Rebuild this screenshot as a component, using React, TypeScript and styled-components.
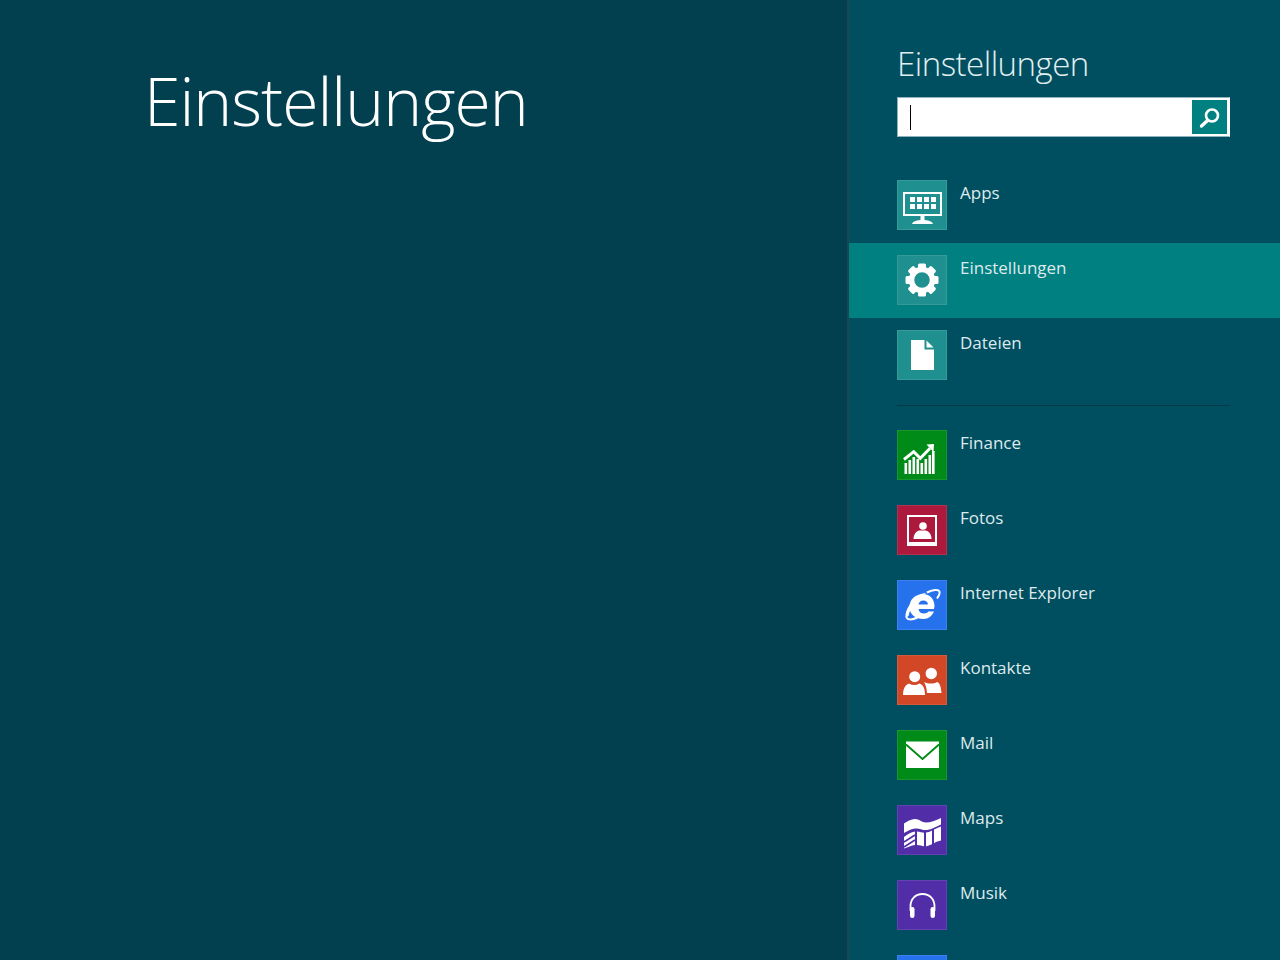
import React from 'react';
import styled, { createGlobalStyle } from 'styled-components';

const GlobalStyle = createGlobalStyle`
  html, body {
    margin: 0;
    padding: 0;
    height: 960px;
    overflow: hidden;
    background: #024050;
  }
`;

const AppsIcon = () => (
  <svg width="50" height="50" viewBox="0 0 50 50">
    <rect x="7" y="13" width="37" height="22" fill="none" stroke="#fff" strokeWidth="2" />
    {[0, 1, 2, 3].map((c) =>
      [0, 1].map((r) => <rect key={`${c}-${r}`} x={13 + c * 7} y={17 + r * 7} width="5" height="5" fill="#fff" />)
    )}
    <path d="M23.5 35h4v5h-4z" fill="#fff" />
    <path d="M15 44c1-3 5-4 10.500-4s9.500 1 10.500 4z" fill="#fff" />
  </svg>
);

const GearIcon = () => (
  <svg width="50" height="50" viewBox="0 0 50 50">
    <circle cx="25" cy="25" r="10.500" fill="none" stroke="#fff" strokeWidth="5.500" />
    {[0, 45, 90, 135, 180, 225, 270, 315].map((a) => (
      <rect key={a} x="21" y="8.500" width="8" height="7" rx="1.500" fill="#fff" transform={`rotate(${a} 25 25)`} />
    ))}
  </svg>
);

const FileIcon = () => (
  <svg width="50" height="50" viewBox="0 0 50 50">
    <path d="M14 10h13.500v9.500H37V40H14z" fill="#fff" />
    <path d="M29.500 10.500l7 7h-7z" fill="#fff" />
  </svg>
);

const FinanceIcon = () => (
  <svg width="50" height="50" viewBox="0 0 50 50">
    {[
      [7.500, 33],
      [11.500, 30],
      [15.500, 27],
      [19.500, 29],
      [23.500, 33],
      [27.500, 29],
      [31.500, 25],
      [35, 21],
    ].map(([x, y]) => (
      <rect key={x} x={x} y={y} width="2.600" height={44 - y} fill="#fff" />
    ))}
    <path d="M7 29.500L16.700 21.700l6.600 6.600L33 18.300" fill="none" stroke="#fff" strokeWidth="3" />
    <path d="M29.500 14.500l7.500-.5-.5 8z" fill="#fff" />
  </svg>
);

const FotosIcon = () => (
  <svg width="50" height="50" viewBox="0 0 50 50">
    <path fillRule="evenodd" d="M10 10h30v31H10zM12 12v25h26V12z" fill="#fff" />
    <circle cx="26" cy="21" r="3.800" fill="#fff" />
    <path d="M16.500 34c0-5 3-8 6-8.500h6c3 .5 6 3.500 6 8.500z" fill="#fff" />
  </svg>
);

const IeIcon = () => (
  <svg width="50" height="50" viewBox="0 0 50 50">
    <path
      fillRule="evenodd"
      d="M37 29H21.500c.5 3 2.500 4.500 5.500 4.500 2 0 3.500-.8 4.500-2H37C35 36 31.500 39 26.500 39 18.500 39 12.500 34.500 12.500 27 12.500 19 19 14 26 14 33 14 37.500 19.500 37.500 26zM21.500 24.500H31c-.3-2.500-2-4-4.700-4-2.500 0-4.300 1.500-4.800 4z"
      fill="#fff"
    />
    <path d="M8.500 37C8 30 14 20 24 14l6-1.500C20 17 13.500 27 11.500 36z" fill="#fff" />
    <path d="M9.500 36c-.5 4 5 4.500 11 1.500" fill="none" stroke="#fff" strokeWidth="2" />
    <path d="M30 12.500c6-3 11.500-3.500 12.500-1 .6 1.700-.8 4.500-2.500 7" fill="none" stroke="#fff" strokeWidth="2" />
  </svg>
);

const KontakteIcon = () => (
  <svg width="50" height="50" viewBox="0 0 50 50">
    <circle cx="34.300" cy="18.500" r="5.700" fill="#fff" />
    <path d="M27 27c2 1 5 1.500 7 1.500s4.500-.5 6-1.500c3 1 4 5 4.500 11H30c-.3-4-1-8-3-11z" fill="#fff" />
    <circle cx="17.700" cy="21.700" r="5.500" fill="#fff" />
    <path d="M6 40c0-6 2-10 6-11.500 3.500 2 7 2 10.500 0 4 1.500 5.500 5.500 5.500 11.500z" fill="#fff" />
  </svg>
);

const MailIcon = () => (
  <svg width="50" height="50" viewBox="0 0 50 50">
    <rect x="9" y="11.500" width="33" height="26.500" fill="#fff" />
    <path d="M9 14.500L25.500 29 42 14.500" fill="none" stroke="#008a17" strokeWidth="1.800" />
  </svg>
);

const MapsIcon = () => (
  <svg width="50" height="50" viewBox="0 0 50 50">
    <path d="M7 18.500c3-2 7-4.500 11-4.500s7 3.500 11 3.500 10-2 15-4.500v6.500c-5 2-9 5-14 5.500s-7-2-12-1.500-8 3-11 4.500z" fill="#fff" />
    <path d="M7 32c3-2.500 7-5 11-5.500v13.500c-4 .5-7 2-11 3.500zM20 26.500c3 .3 5 1 7 1.200v13.500c-2-.2-4-1-7-1.200zM29 27.500c2 0 4-1 6-2v13.700c-2 .8-4 1.800-6 2zM37 24.500c2-1 4.500-2 7-3v14c-2.500.5-5 1.500-7 2.700z" fill="#fff" />
    <path d="M7 37l11-7M7 42l11-7" fill="none" stroke="#512da8" strokeWidth="1.600" />
  </svg>
);

const MusikIcon = () => (
  <svg width="50" height="50" viewBox="0 0 50 50">
    <path d="M13.500 31v-4.500C13.500 19 18.500 14 25.500 14S37.500 19 37.500 26.500V31" fill="none" stroke="#fff" strokeWidth="1.800" />
    <rect x="13" y="27" width="4.500" height="11" rx="2.200" fill="#fff" />
    <rect x="33.500" y="27" width="4.500" height="11" rx="2.200" fill="#fff" />
  </svg>
);

const SearchIcon = () => (
  <svg width="36" height="36" viewBox="0 0 36 36">
    <circle cx="20" cy="15.500" r="6" fill="none" stroke="#fff" strokeWidth="2.600" />
    <path d="M15.500 20.500L9.500 26" stroke="#fff" strokeWidth="3.400" strokeLinecap="round" />
  </svg>
);

const systemApps = [
  { name: 'Apps', icon: <AppsIcon />, color: '#1f8f8f' },
  { name: 'Einstellungen', icon: <GearIcon />, color: '#1f8f8f', selected: true },
  { name: 'Dateien', icon: <FileIcon />, color: '#1f8f8f' },
];

const userApps = [
  { name: 'Finance', icon: <FinanceIcon />, color: '#008a17' },
  { name: 'Fotos', icon: <FotosIcon />, color: '#ac193d' },
  { name: 'Internet Explorer', icon: <IeIcon />, color: '#2672ec' },
  { name: 'Kontakte', icon: <KontakteIcon />, color: '#d24726' },
  { name: 'Mail', icon: <MailIcon />, color: '#008a17' },
  { name: 'Maps', icon: <MapsIcon />, color: '#512da8' },
  { name: 'Musik', icon: <MusikIcon />, color: '#512da8' },
  { name: '', icon: null, color: '#2672ec' },
];

const App = () => {
  return (
    <Screen>
      <GlobalStyle />
      <MainPane>
        <PageTitle>Einstellungen</PageTitle>
      </MainPane>
      <SearchCharm>
        <CharmTitle>Einstellungen</CharmTitle>
        <SearchBox>
          <SearchField>
            <Caret />
          </SearchField>
          <SearchButton>
            <SearchIcon />
          </SearchButton>
        </SearchBox>
        <AppList>
          {systemApps.map((app) => (
            <AppRow key={app.name} $selected={app.selected}>
              <Tile $color={app.color}>{app.icon}</Tile>
              <AppName>{app.name}</AppName>
            </AppRow>
          ))}
        </AppList>
        <Separator />
        <AppList>
          {userApps.map((app) => (
            <AppRow key={app.color + app.name}>
              <Tile $color={app.color}>{app.icon}</Tile>
              <AppName>{app.name}</AppName>
            </AppRow>
          ))}
        </AppList>
      </SearchCharm>
    </Screen>
  );
};

const Screen = styled.div`
  display: flex;
  width: 1280px;
  height: 960px;
  overflow: hidden;
  font-family: 'Open Sans', 'Noto Sans', 'Liberation Sans', sans-serif;
`;

const MainPane = styled.main`
  width: 847px;
  flex: none;
  padding: 56px 0 0 144px;
  box-sizing: border-box;
  background: #024050;
`;

const PageTitle = styled.h1`
  margin: 0;
  font-size: 66px;
  line-height: 88px;
  font-weight: 300;
  letter-spacing: -1px;
  color: #fff;
`;

const SearchCharm = styled.aside`
  flex: 1;
  display: flex;
  flex-direction: column;
  border-left: 2px solid #1f4452;
  background: #004f60;
`;

const CharmTitle = styled.h2`
  margin: 42px 0 0 48px;
  height: 44px;
  font-size: 33px;
  line-height: 44px;
  font-weight: 300;
  letter-spacing: -0.5px;
  color: #e3eef0;
`;

const SearchBox = styled.div`
  flex: none;
  display: flex;
  width: 333px;
  height: 40px;
  margin: 11px 0 31px 48px;
  padding: 2px;
  box-sizing: border-box;
  background: #fff;
  border: 1px solid #8fb3bd;
  border-right-color: #fff;
`;

const SearchField = styled.div`
  flex: 1;
  display: flex;
  align-items: center;
  padding-left: 10px;
`;

const Caret = styled.span`
  width: 1px;
  height: 25px;
  background: #000;
`;

const SearchButton = styled.div`
  width: 35px;
  height: 34px;
  background: #008080;
`;

const AppList = styled.ul`
  flex: none;
  list-style: none;
  margin: 0;
  padding: 0;
`;

const AppRow = styled.li<{ $selected?: boolean }>`
  display: flex;
  height: 75px;
  padding: 12px 0 0 48px;
  box-sizing: border-box;
  background: ${(props) => (props.$selected ? '#008080' : 'transparent')};
`;

const Tile = styled.div<{ $color: string }>`
  width: 50px;
  height: 50px;
  flex: none;
  box-shadow: inset 0 0 0 1px rgba(255, 255, 255, 0.1);
  background: ${(props) => props.$color};
`;

const AppName = styled.span`
  margin: 0 0 0 13px;
  font-size: 17px;
  line-height: 25px;
  color: #dfeaed;
`;

const Separator = styled.div`
  flex: none;
  width: 333px;
  height: 1px;
  margin: 12px 0 12px 48px;
  background: #023c4b;
`;

export default App;
